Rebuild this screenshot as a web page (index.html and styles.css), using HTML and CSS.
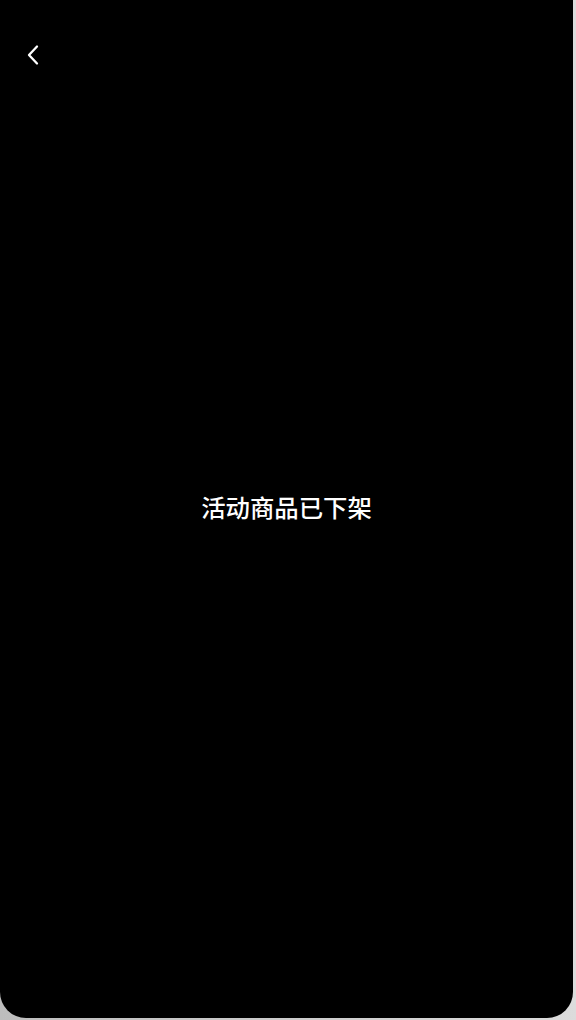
FILE: index.html
```html
<!DOCTYPE html>
<html lang="zh">
<head>
<meta charset="utf-8">
<title>活动商品已下架</title>
<link rel="stylesheet" href="styles.css">
</head>
<body>
<div class="screen">
  <header class="topbar">
    <button class="back" aria-label="返回">
      <svg width="16" height="22" viewBox="0 0 16 22"><path d="M12 2.5 L4 11 L12 19.5" fill="none" stroke="#fff" stroke-width="2.3" stroke-linecap="round" stroke-linejoin="round"/></svg>
    </button>
  </header>
  <main class="content">
    <p class="msg">活动商品已下架</p>
  </main>
</div>
</body>
</html>
```

FILE: styles.css
```css
html, body {
  margin: 0;
  padding: 0;
  height: 100%;
}
body {
  background: linear-gradient(90deg, #bdbdbd, #dcdcdc);
  font-family: "Noto Sans CJK SC", "Noto Sans", sans-serif;
}
.screen {
  width: 573px;
  height: 1018px;
  background: #000;
  border-radius: 0 0 26px 26px;
  display: flex;
  flex-direction: column;
  box-sizing: border-box;
}
.topbar {
  height: 110px;
  padding: 44px 0 0 25px;
  box-sizing: border-box;
}
.back {
  background: none;
  border: 0;
  padding: 0;
  width: 16px;
  height: 22px;
  display: flex;
  align-items: center;
  justify-content: center;
  cursor: pointer;
}
.content {
  flex: 1;
  display: flex;
  justify-content: center;
  padding-top: 380px;
  box-sizing: border-box;
}
.msg {
  margin: 0;
  color: #fff;
  font-size: 24.4px;
  font-weight: 500;
  line-height: 33px;
  height: 33px;
}
```
